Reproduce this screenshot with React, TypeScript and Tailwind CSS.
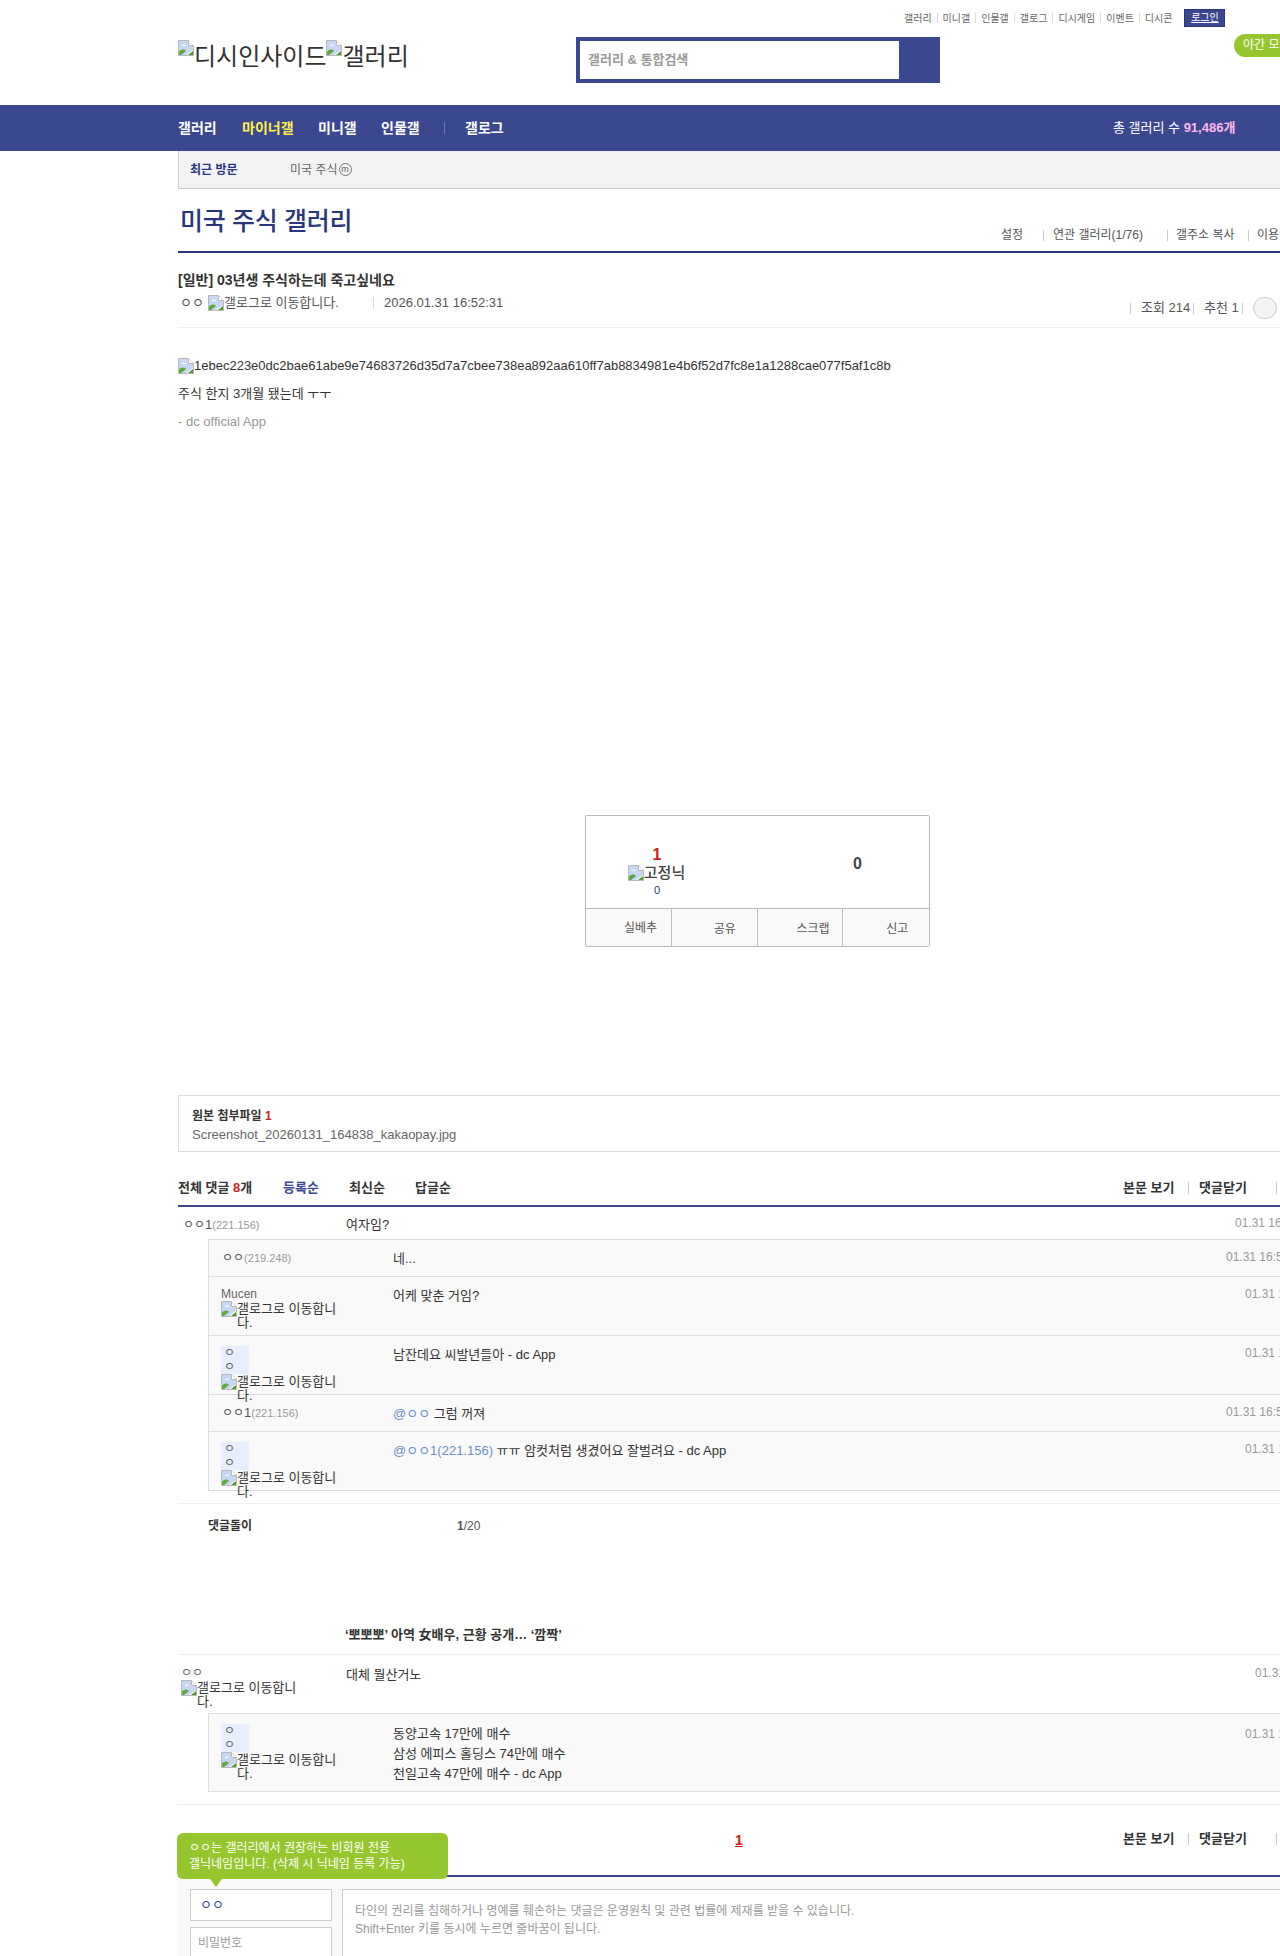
import React from 'react'

const font = '[font-family:"Liberation_Sans","Noto_Sans_CJK_KR",sans-serif]'

// chrome's broken image placeholder
const Broken = () => (
  <svg width="16" height="16" viewBox="0 0 16 16" className="shrink-0">
    <path d="M0.5 0.5H10.5L15.5 5.5V15.5H0.5Z" fill="#fff" stroke="#b8b8b8" />
    <path d="M1 1H10V6H15V10L8 15H1Z" fill="#c5d7f2" />
    <path d="M4 6C5 4 7 4 8.5 6Z" fill="#fff" />
    <path d="M1 15V12C3 9 6 9 8 11L3 15Z" fill="#5fa83c" />
    <path d="M10 15L15 11V15Z" fill="#4a9a2c" />
    <path d="M10.5 0.5V5.5H15.5" fill="#fff" stroke="#b8b8b8" />
  </svg>
)

const Fixnick = ({ bg }: { bg?: boolean }) => (
  <div className="w-[128px]">
    <div className={bg ? 'text-[12px] leading-[14px] w-[28px] px-[3px] bg-[#e8eefb] text-[#666]' : 'text-[12px] leading-[14px] text-[#666]'}>ㅇㅇ</div>
    <div className="flex items-start">
      <Broken />
      <span className="text-[13px] leading-[14px] text-[#333] w-[108px] mt-[1px]">갤로그로 이동합니다.</span>
    </div>
  </div>
)

const Ip = ({ name, ip }: { name: React.ReactNode; ip: string }) => (
  <div className="text-[12px] leading-[16px] text-[#555] whitespace-nowrap">
    {name}
    <span className="text-[11px] text-[#999]">({ip})</span>
  </div>
)

const Sep = () => <span className="w-px h-[11px] bg-[#ccc] shrink-0" />

const topLinks = ['갤러리', '미니갤', '인물갤', '갤로그', '디시게임', '이벤트', '디시콘']

const CommentTools = () => (
  <div className="flex items-center text-[13px] font-bold text-[#333] ml-auto w-[155px]">
    <span className="w-[54px] whitespace-nowrap">본문 보기</span>
    <span className="w-px h-[12px] bg-[#ccc] ml-[11px]" />
    <span className="w-[51px] ml-[10px] whitespace-nowrap">댓글닫기</span>
    <span className="w-px h-[12px] bg-[#ccc] ml-[26px]" />
  </div>
)

export default function App() {
  return (
    <div className={`${font} w-[1280px] h-[1956px] overflow-hidden bg-white relative text-[#333]`}>
      {/* header */}
      <div className="relative h-[105px] pl-[178px]">
        <div className="flex items-center h-[18px] mt-[9px] pl-[726px] text-[10px] text-[#666] pt-0 translate-y-[0px] absolute top-0 left-[178px] whitespace-nowrap">
          {topLinks.map((l, i) => (
            <React.Fragment key={l}>
              {i > 0 && <span className="w-px h-[10px] bg-[#ddd] mx-[5px]" />}
              <span>{l}</span>
            </React.Fragment>
          ))}
          <span className="ml-[12px] w-[41px] h-[18px] bg-[#3b4890] border border-[#29367c] text-white text-center leading-[16px] underline">로그인</span>
        </div>
        <div className="absolute left-[1234px] top-[34px] w-[100px] h-[23px] rounded-full bg-[#95c62d] text-white text-[12px] leading-[23px] pl-[9px] whitespace-nowrap">야간 모드</div>
        <div className="flex pt-[37px]">
          <div className="w-[398px] flex items-start pt-[3px] text-[24px] leading-[28px] text-[#333] whitespace-nowrap">
            <Broken />
            <span className="mt-[3px]">디시인사이드</span>
            <Broken />
            <span className="mt-[3px]">갤러리</span>
          </div>
          <div className="w-[364px] h-[46px] bg-[#3b4890] p-[4px]">
            <div className="w-[319px] h-[38px] bg-white text-[13px] font-bold leading-[38px] text-[#999] pl-[8px]">갤러리 &amp; 통합검색</div>
          </div>
        </div>
      </div>

      {/* nav */}
      <div className="h-[46px] bg-[#3b4890] flex items-center pl-[178px] text-[14px] font-bold text-white whitespace-nowrap">
        <span className="w-[64px]">갤러리</span>
        <span className="w-[76px] text-[#fff04a]">마이너갤</span>
        <span className="w-[63px]">미니갤</span>
        <span className="w-[63px]">인물갤</span>
        <span className="w-px h-[12px] bg-[#6d78b0]" />
        <span className="ml-[20px]">갤로그</span>
        <span className="absolute left-[1113px] font-normal text-[13px]">
          총 갤러리 수 <b className="text-[#ffb8ec]">91,486개</b>
        </span>
      </div>

      <div className="ml-[178px] w-[1160px]">
        {/* recent visit */}
        <div className="h-[38px] bg-[#f3f3f3] border-l border-b border-[#ccc] flex items-center pl-[11px] text-[12px]">
          <b className="w-[100px] text-[#29367c]">최근 방문</b>
          <span className="text-[#666]">미국 주식</span>
          <span className="ml-[1px] w-[13px] h-[13px] rounded-full border border-[#777] text-[9px] leading-[10px] text-center text-[#666]">m</span>
        </div>

        {/* gallery title */}
        <div className="h-[64px] border-b-2 border-[#29367c] flex relative">
          <h2 className="ml-[2px] mt-[16px] text-[25px] leading-[32px] font-medium text-[#29367c] tracking-[-0.3px] whitespace-nowrap">미국 주식 갤러리</h2>
          <div className="absolute left-[823px] top-[37px] flex items-center text-[12px] text-[#555] whitespace-nowrap">
            <span className="w-[42px]">설정</span>
            <Sep />
            <span className="w-[123px] pl-[9px]">연관 갤러리(1/76)</span>
            <Sep />
            <span className="w-[80px] pl-[8px]">갤주소 복사</span>
            <Sep />
            <span className="pl-[8px]">이용</span>
          </div>
        </div>

        {/* post head */}
        <div className="h-[75px] border-b border-[#eee] relative">
          <h3 className="pt-[17px] text-[14px] leading-[20px] font-bold text-[#333] whitespace-nowrap">[일반] 03년생 주식하는데 죽고싶네요</h3>
          <div className="flex items-center mt-[5px] text-[13px] leading-[16px] text-[#555] whitespace-nowrap">
            <span className="ml-[2px] w-[28px]">ㅇㅇ</span>
            <Broken />
            <span className="w-[140px]">갤로그로 이동합니다.</span>
            <span className="w-px h-[12px] bg-[#ddd] ml-[9px]" />
            <span className="ml-[10px]">2026.01.31 16:52:31</span>
          </div>
          <div className="absolute left-[952px] top-[44px] flex items-center text-[13px] text-[#555] whitespace-nowrap">
            <Sep />
            <span className="w-[62px] pl-[10px]">조회 214</span>
            <Sep />
            <span className="w-[48px] pl-[10px]">추천 1</span>
            <Sep />
            <span className="ml-[10px] w-[24px] h-[22px] rounded-full border border-[#ccc] bg-[#f3f3f3]" />
          </div>
        </div>

        {/* post body */}
        <div className="h-[767px] pt-[30px] text-[13px] text-[#333]">
          <div className="flex items-center h-[16px]">
            <Broken />
            <span>1ebec223e0dc2bae61abe9e74683726d35d7a7cbee738ea892aa610ff7ab8834981e4b6f52d7fc8e1a1288cae077f5af1c8b</span>
          </div>
          <p className="mt-[10px] leading-[20px]">주식 한지 3개월 됐는데 ㅜㅜ</p>
          <p className="mt-[8px] leading-[20px] text-[#999]">- dc official App</p>

          {/* recommend box */}
          <div className="ml-[407px] mt-[383px] w-[345px] h-[132px] border border-[#bbb] rounded-[2px] flex flex-col">
            <div className="h-[93px] border-b border-[#bbb] relative">
              <div className="absolute left-[41px] top-[30px] w-[60px] text-center flex flex-col items-center">
                <b className="text-[16px] leading-[18px] text-[#cc1e17]">1</b>
                <div className="flex items-center text-[15px] leading-[18px] font-medium text-[#444] whitespace-nowrap -ml-[1px]">
                  <Broken />
                  <span>고정닉</span>
                </div>
                <span className="text-[11px] leading-[14px] text-[#29367c] mt-[1px]">0</span>
              </div>
              <b className="absolute left-[267px] top-[38px] text-[16px] leading-[20px] text-[#444]">0</b>
            </div>
            <div className="flex-1 grid grid-cols-4 bg-[#f9f9f9] text-[12px] text-[#555]">
              <div className="border-r border-[#bbb] pl-[38px] pt-[10px]">실베추</div>
              <div className="border-r border-[#bbb] pl-[42px] pt-[11px]">공유</div>
              <div className="border-r border-[#bbb] pl-[39px] pt-[11px]">스크랩</div>
              <div className="pl-[43px] pt-[11px]">신고</div>
            </div>
          </div>
        </div>

        {/* attachment */}
        <div className="h-[57px] border border-[#ddd] pl-[13px] pt-[11px]">
          <div className="text-[12px] leading-[18px] font-bold text-[#333]">원본 첨부파일 <span className="text-[#cc1e17]">1</span></div>
          <div className="text-[13px] leading-[19px] text-[#666]">Screenshot_20260131_164838_kakaopay.jpg</div>
        </div>

        {/* comment head */}
        <div className="mt-[23px] h-[32px] border-b-2 border-[#3b4890] flex items-start text-[13px] font-bold whitespace-nowrap pt-[3px] relative">
          <span className="w-[105px]">전체 댓글 <span className="text-[#cc1e17]">8</span>개</span>
          <span className="w-[66px] text-[#3b4890]">등록순</span>
          <span className="w-[66px]">최신순</span>
          <span>답글순</span>
          <div className="absolute left-[945px] top-[3px]"><CommentTools /></div>
        </div>

        {/* first comment */}
        <div className="h-[32px] flex pt-[10px] text-[13px] leading-[16px]">
          <div className="w-[168px] pl-[5px]"><Ip name={<>ㅇㅇ<span className="text-[13px]">1</span></>} ip="221.156" /></div>
          <div className="w-[889px]">여자임?</div>
          <div className="text-[12px] text-[#999] whitespace-nowrap -mt-[2px]">01.31 16:53:02</div>
        </div>

        <div className="ml-[30px] border border-[#ddd] bg-[#f9f9f9]">
          <div className="h-[37px] flex pt-[10px] border-b border-[#ddd] text-[13px] leading-[18px]">
            <div className="w-[184px] pl-[13px]"><Ip name="ㅇㅇ" ip="219.248" /></div>
            <div className="w-[833px]">네...</div>
            <div className="text-[12px] text-[#999] whitespace-nowrap -mt-[2px]">01.31 16:53:40</div>
          </div>
          <div className="h-[59px] flex pt-[10px] border-b border-[#ddd] text-[13px] leading-[18px]">
            <div className="w-[184px] pl-[12px]">
              <div className="text-[12px] leading-[14px] text-[#666]">Mucen</div>
              <div className="flex items-start">
                <Broken />
                <span className="text-[13px] leading-[14px] w-[108px] mt-[1px]">갤로그로 이동합니다.</span>
              </div>
            </div>
            <div className="w-[852px]">어케 맞춘 거임?</div>
            <div className="text-[12px] text-[#999] whitespace-nowrap -mt-[2px]">01.31 16:54:11</div>
          </div>
          <div className="h-[59px] flex pt-[10px] border-b border-[#ddd] text-[13px] leading-[18px]">
            <div className="w-[184px] pl-[12px]"><Fixnick bg /></div>
            <div className="w-[852px]">남잔데요 씨발년들아 - dc App</div>
            <div className="text-[12px] text-[#999] whitespace-nowrap -mt-[2px]">01.31 16:54:30</div>
          </div>
          <div className="h-[37px] flex pt-[10px] border-b border-[#ddd] text-[13px] leading-[18px]">
            <div className="w-[184px] pl-[13px]"><Ip name={<>ㅇㅇ<span className="text-[13px]">1</span></>} ip="221.156" /></div>
            <div className="w-[833px]"><span className="text-[#6f8fc9]">@ㅇㅇ</span> 그럼 꺼져</div>
            <div className="text-[12px] text-[#999] whitespace-nowrap -mt-[2px]">01.31 16:55:02</div>
          </div>
          <div className="h-[58px] flex pt-[10px] text-[13px] leading-[18px]">
            <div className="w-[184px] pl-[12px]"><Fixnick bg /></div>
            <div className="w-[852px]"><span className="text-[#6f8fc9]">@ㅇㅇ1(221.156)</span> ㅠㅠ 암컷처럼 생겼어요 잘벌려요 - dc App</div>
            <div className="text-[12px] text-[#999] whitespace-nowrap -mt-[2px]">01.31 16:55:44</div>
          </div>
        </div>

        {/* comment bot + ad */}
        <div className="mt-[12px] h-[152px] border-t border-b border-[#eee] relative">
          <div className="pl-[30px] pt-[13px] flex text-[12px] leading-[18px]">
            <b className="w-[249px]">댓글돌이</b>
            <span className="text-[#555]"><b>1</b>/20</span>
          </div>
          <div className="absolute left-[167px] top-[121px] text-[13px] font-bold whitespace-nowrap">‘뽀뽀뽀’ 아역 女배우, 근황 공개… ‘깜짝’</div>
        </div>

        {/* second comment */}
        <div className="h-[58px] flex pt-[11px] text-[13px] leading-[18px]">
          <div className="w-[168px] pl-[3px]"><Fixnick /></div>
          <div className="w-[909px]">대체 뭘산거노</div>
          <div className="text-[12px] text-[#999] whitespace-nowrap -mt-[2px]">01.31 17:01:21</div>
        </div>
        <div className="ml-[30px] h-[79px] border border-[#ddd] bg-[#f9f9f9] flex pt-[10px] text-[13px] leading-[20px]">
          <div className="w-[184px] pl-[12px]"><Fixnick bg /></div>
          <div className="w-[852px]">
            <p>동양고속 17만에 매수</p>
            <p>삼성 에피스 홀딩스 74만에 매수</p>
            <p>천일고속 47만에 매수 - dc App</p>
          </div>
          <div className="text-[12px] text-[#999] whitespace-nowrap">01.31 17:03:12</div>
        </div>

        {/* pagination */}
        <div className="mt-[12px] border-t border-[#eee] h-[71px] relative">
          <span className="absolute left-[557px] top-[25px] text-[14px] font-bold text-[#cc1e17] underline">1</span>
          <div className="absolute left-[945px] top-[24px]"><CommentTools /></div>
        </div>

        {/* write form */}
        <div className="border-t-2 border-[#3b4890] bg-[#f9f9f9] h-[100px] flex gap-[10px] pt-[12px] pl-[12px]">
          <div className="w-[142px] flex flex-col gap-[6px]">
            <div className="h-[32px] border border-[#ccc] bg-white pl-[9px] text-[13px] leading-[30px] text-[#3b4890]">ㅇㅇ</div>
            <div className="h-[32px] border border-[#ccc] bg-white pl-[7px] text-[12px] leading-[30px] text-[#999]">비밀번호</div>
          </div>
          <div className="flex-1 h-[100px] border border-[#ccc] bg-white pl-[12px] pt-[12px] text-[12px] leading-[18px] text-[#999] whitespace-nowrap">
            <p>타인의 권리를 침해하거나 명예를 훼손하는 댓글은 운영원칙 및 관련 법률에 제재를 받을 수 있습니다.</p>
            <p>Shift+Enter 키를 동시에 누르면 줄바꿈이 됩니다.</p>
          </div>
        </div>
      </div>

      {/* green tooltip */}
      <div className="absolute left-[177px] top-[1833px] w-[271px] h-[46px] rounded-[6px] bg-[#95c62d] text-white text-[12px] leading-[16px] pl-[12px] pt-[7px] whitespace-nowrap">
        <p>ㅇㅇ는 갤러리에서 권장하는 비회원 전용</p>
        <p>갤닉네임입니다. (삭제 시 닉네임 등록 가능)</p>
        <span className="absolute left-[33px] top-[46px] border-x-[6px] border-x-transparent border-t-[8px] border-t-[#95c62d]" />
      </div>
    </div>
  )
}
